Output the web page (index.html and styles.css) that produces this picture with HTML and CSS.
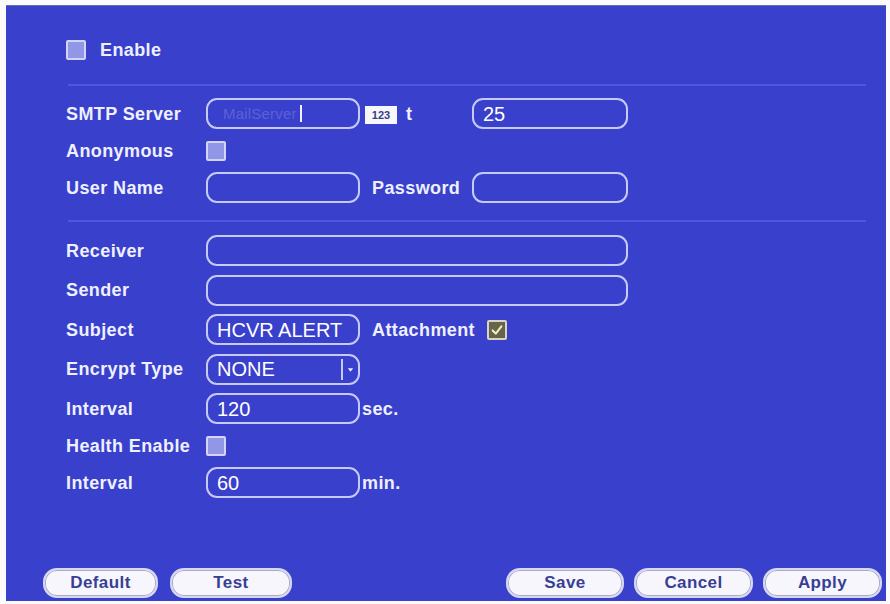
FILE: index.html
```html
<!DOCTYPE html>
<html>
<head>
<meta charset="utf-8">
<link rel="stylesheet" href="styles.css">
</head>
<body>
<div class="panel">
  <div class="enable-row">
    <span class="chk"></span>
    <span class="lbl">Enable</span>
  </div>
  <div class="divider first"></div>

  <div class="section one">
    <div class="row">
      <span class="lbl col">SMTP Server</span>
      <span class="field short"><span class="ghost">MailServer</span><span class="caret"></span></span>
      <span class="badge">123</span>
      <span class="lbl t">t</span>
      <span class="field port"><span class="val">25</span></span>
    </div>
    <div class="row">
      <span class="lbl col">Anonymous</span>
      <span class="chk"></span>
    </div>
    <div class="row">
      <span class="lbl col">User Name</span>
      <span class="field short"></span>
      <span class="lbl side">Password</span>
      <span class="field port"></span>
    </div>
  </div>

  <div class="divider second"></div>

  <div class="section two">
    <div class="row">
      <span class="lbl col">Receiver</span>
      <span class="field long"></span>
    </div>
    <div class="row">
      <span class="lbl col">Sender</span>
      <span class="field long"></span>
    </div>
    <div class="row">
      <span class="lbl col">Subject</span>
      <span class="field short"><span class="val">HCVR ALERT</span></span>
      <span class="lbl side att">Attachment</span>
      <span class="chk checked">
        <svg viewBox="0 0 20 20" width="16" height="16"><path d="M4.5 10.5 L8.5 14.5 L15.5 5.5" fill="none" stroke="#f3efb4" stroke-width="2.6" stroke-linecap="round" stroke-linejoin="round"/></svg>
      </span>
    </div>
    <div class="row">
      <span class="lbl col">Encrypt Type</span>
      <span class="field short select"><span class="val">NONE</span><span class="arrow"><svg viewBox="0 0 10 10" width="9" height="9"><path d="M2 3.5 L8 3.5 L5 7.5 Z" fill="#e8eaff"/></svg></span></span>
    </div>
    <div class="row">
      <span class="lbl col">Interval</span>
      <span class="field short"><span class="val">120</span></span>
      <span class="lbl unit">sec.</span>
    </div>
    <div class="row health">
      <span class="lbl col">Health Enable</span>
      <span class="chk"></span>
    </div>
    <div class="row">
      <span class="lbl col">Interval</span>
      <span class="field short"><span class="val">60</span></span>
      <span class="lbl unit">min.</span>
    </div>
  </div>

  <div class="footer">
    <div class="group left">
      <button class="btn b-default">Default</button>
      <button class="btn b-test">Test</button>
    </div>
    <div class="group right">
      <button class="btn b-save">Save</button>
      <button class="btn b-cancel">Cancel</button>
      <button class="btn b-apply">Apply</button>
    </div>
  </div>
</div>
</body>
</html>
```

FILE: styles.css
```css
* { box-sizing: border-box; }
html, body { margin: 0; padding: 0; background: #fbfbfd; }
body { width: 890px; height: 604px; overflow: hidden; font-family: "Liberation Sans", Arial, sans-serif; }

.panel {
  margin: 5px 0 0 6px;
  width: 880px;
  height: 596px;
  background: #3940cc;
  border-top: 1px solid #6a6ea8;
  display: flex;
  flex-direction: column;
}

.lbl {
  color: #eef0ff;
  font-weight: bold;
  font-size: 18px;
  letter-spacing: 0.4px;
  white-space: nowrap;
  line-height: 1;
}

.enable-row {
  margin-top: 34px;
  height: 20px;
  padding-left: 60px;
  display: flex;
  align-items: center;
  gap: 14px;
}

.chk {
  width: 20px;
  height: 20px;
  background: #9296e6;
  border: 2px solid #d2d4fa;
  border-radius: 2px;
  display: inline-flex;
  align-items: center;
  justify-content: center;
  flex: none;
}
.chk.checked { background: #66644f; border-color: #d8d6c0; }

.divider {
  height: 2px;
  margin-left: 62px;
  margin-right: 20px;
  background: #4f57dc;
}
.divider.first { margin-top: 24px; }
.divider.second { margin-top: 17px; }

.section { padding-left: 60px; display: flex; flex-direction: column; }
.section.one { margin-top: 12px; gap: 6px; }
.section.two { margin-top: 13px; gap: 8.5px; }

.row { height: 31px; display: flex; align-items: center; }
.row.health { height: 26px; }
.col { width: 140px; flex: none; }

.field {
  height: 31px;
  border: 2px solid #c6cafa;
  border-radius: 11px;
  display: flex;
  align-items: center;
  padding-left: 9px;
  flex: none;
  position: relative;
}
.field.short { width: 154px; }
.field.port { width: 156px; }
.field.long { width: 422px; }

.val { color: #ffffff; font-size: 20px; line-height: 1; }

.ghost { color: #5a62d8; font-size: 15px; letter-spacing: 0.2px; margin-left: 6px; }
.caret { width: 2px; height: 17px; background: #f0f0ff; margin-left: 3px; }

.badge {
  margin-left: 5px;
  width: 32px;
  height: 18px;
  background: #f7f7fb;
  color: #3a3f88;
  font-size: 11px;
  font-weight: bold;
  display: flex;
  align-items: center;
  justify-content: center;
  margin-top: 2px;
}
.t { margin-left: 9px; width: 66px; }

.side { margin-left: 12px; width: 100px; }
.side.att { width: 115px; }

.unit { margin-left: 2px; }

.select .arrow {
  position: absolute;
  right: 0;
  top: 3px;
  bottom: 3px;
  width: 17px;
  border-left: 2px solid #c6cafa;
  display: flex;
  align-items: center;
  justify-content: center;
}

.footer {
  margin-top: auto;
  margin-bottom: 3px;
  display: flex;
  justify-content: space-between;
  padding-left: 37px;
  padding-right: 4px;
}
.group { display: flex; }
.group.left { gap: 12px; }
.group.right { gap: 10px; }

.btn {
  height: 30px;
  background: #f6f6fc;
  border: 2px solid #d6d8f2;
  box-shadow: inset 0 0 0 1px #a8aac8;
  border-radius: 14px;
  color: #383e94;
  font-family: "Liberation Sans", Arial, sans-serif;
  font-weight: bold;
  font-size: 17px;
  letter-spacing: 0.4px;
  padding: 0;
}
.b-default { width: 115px; }
.b-test { width: 122px; }
.b-save { width: 118px; }
.b-cancel { width: 119px; }
.b-apply { width: 119px; }
```
